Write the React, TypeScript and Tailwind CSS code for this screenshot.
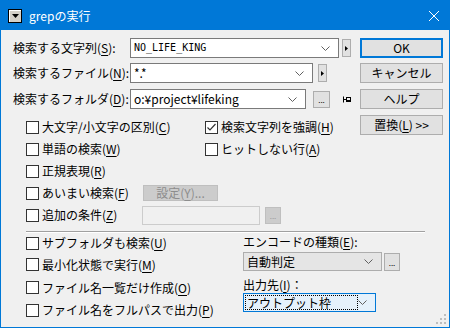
import React from "react";

const jp = "font-['Meiryo_UI','Noto_Sans_CJK_JP',sans-serif]";

function K({ k }: { k: string }) {
  return <span className="underline underline-offset-[2px]">{k}</span>;
}

function Chevron() {
  return (
    <svg width="9" height="5" viewBox="0 0 9 5" className="shrink-0">
      <path d="M0.5 0.5 L4.5 4.5 L8.5 0.5" fill="none" stroke="#606060" strokeWidth="1" />
    </svg>
  );
}

function Box({ checked }: { checked?: boolean }) {
  return (
    <span className="flex h-[13px] w-[13px] shrink-0 items-center justify-center border border-[#333333] bg-white">
      {checked && (
        <svg width="11" height="11" viewBox="0 0 11 11">
          <path d="M1.5 5.5 L4 8 L9.5 2" fill="none" stroke="#333333" strokeWidth="1.2" />
        </svg>
      )}
    </span>
  );
}

function Check({ checked, children }: { checked?: boolean; children: React.ReactNode }) {
  return (
    <div className="flex items-center gap-[3px] whitespace-nowrap">
      <Box checked={checked} />
      <span>{children}</span>
    </div>
  );
}

function ArrowBtn() {
  return (
    <div className="flex h-[18px] w-[9px] shrink-0 items-center justify-center border border-[#adadad] bg-[#e1e1e1]">
      <svg width="3" height="5" viewBox="0 0 3 5">
        <path d="M0 0 L3 2.5 L0 5 Z" fill="#000" />
      </svg>
    </div>
  );
}

function Btn({ children, def }: { children: React.ReactNode; def?: boolean }) {
  return (
    <div
      className={
        def
          ? "flex h-[20px] w-[83px] items-center justify-center border border-[#0078d7] bg-[#e1e1e1] shadow-[inset_0_0_0_1px_#0078d7]"
          : "flex h-[20px] w-[83px] items-center justify-center border border-[#adadad] bg-[#e1e1e1]"
      }
    >
      {children}
    </div>
  );
}

export default function App() {
  return (
    <div className={`flex h-[328px] w-[450px] flex-col border border-[#0078d7] text-[12px] leading-none text-black ${jp}`}>
      {/* title bar */}
      <div className="flex h-[29px] shrink-0 items-center bg-[#0078d7] text-white">
        <div className="ml-[7px] flex h-[14px] w-[14px] items-center justify-center border border-black bg-[#d4d0c8] shadow-[inset_1px_1px_0_#ffffff]">
          <svg width="7" height="4" viewBox="0 0 7 4">
            <path d="M0 0 H7 L3.5 4 Z" fill="#000" />
          </svg>
        </div>
        <span className="ml-[7px] text-[12px]">grepの実行</span>
        <svg width="10" height="10" viewBox="0 0 10 10" className="ml-auto mr-[10px]">
          <path d="M0 0 L10 10 M10 0 L0 10" stroke="#fff" strokeWidth="1" />
        </svg>
      </div>

      {/* body */}
      <div className="relative flex-1 bg-[#f0f0f0] pl-[12px] pr-[6px] pt-[8px]">
        <div className="flex">
          <div className="flex flex-1 flex-col">
            <div className="flex h-[20px] items-center">
              <span className="w-[117px] shrink-0">検索する文字列(<K k="S" />):</span>
              <div className="flex h-[20px] w-[209px] items-center justify-between border border-[#7a7a7a] bg-white pl-[3px] pr-[8px]">
                <span className="font-['DejaVu_Sans_Mono',monospace] text-[10px]">NO_LIFE_KING</span>
                <Chevron />
              </div>
              <div className="ml-[3px]"><ArrowBtn /></div>
            </div>
            <div className="mt-[5px] flex h-[20px] items-center">
              <span className="w-[117px] shrink-0">検索するファイル(<K k="N" />):</span>
              <div className="flex h-[20px] w-[183px] items-center justify-between border border-[#7a7a7a] bg-white pl-[3px] pr-[8px]">
                <span>*.*</span>
                <Chevron />
              </div>
              <div className="ml-[5px]"><ArrowBtn /></div>
            </div>
            <div className="mt-[6px] flex h-[20px] items-center">
              <span className="w-[117px] shrink-0">検索するフォルダ(<K k="D" />):</span>
              <div className="flex h-[20px] w-[176px] items-center justify-between border border-[#7a7a7a] bg-white pl-[3px] pr-[8px]">
                <span>o:¥project¥lifeking</span>
                <Chevron />
              </div>
              <div className="ml-[7px] flex h-[17px] w-[17px] items-end justify-center border border-[#adadad] bg-[#e1e1e1] pb-[3px] text-[8px]">...</div>
              <svg width="8" height="7" viewBox="0 0 8 7" className="ml-[13px]">
                <path d="M0.5 0.5 V6.5 M0.5 3.5 H3" stroke="#000" strokeWidth="1" fill="none" />
                <rect x="3.5" y="1.5" width="4" height="4" stroke="#000" strokeWidth="1" fill="none" />
                <path d="M3.5 4.5 H7.5" stroke="#000" strokeWidth="1" />
              </svg>
            </div>

            {/* options */}
            <div className="ml-[13px] mt-[7px] flex flex-col">
              <div className="flex h-[22px] items-center">
                <div className="w-[179px]"><Check>大文字/小文字の区別(<K k="C" />)</Check></div>
                <Check checked>検索文字列を強調(<K k="H" />)</Check>
              </div>
              <div className="flex h-[22px] items-center">
                <div className="w-[179px]"><Check>単語の検索(<K k="W" />)</Check></div>
                <Check>ヒットしない行(<K k="A" />)</Check>
              </div>
              <div className="flex h-[22px] items-center">
                <Check>正規表現(<K k="R" />)</Check>
              </div>
              <div className="flex h-[22px] items-center">
                <div className="w-[117px]"><Check>あいまい検索(<K k="F" />)</Check></div>
                <div className="flex h-[16px] w-[75px] items-center justify-center border border-[#bfbfbf] bg-[#cccccc] text-[#8d8d8d]">
                  設定(<K k="Y" />)...
                </div>
              </div>
              <div className="flex h-[22px] items-center">
                <div className="w-[116px]"><Check>追加の条件(<K k="Z" />)</Check></div>
                <div className="h-[19px] w-[118px] border border-[#cccccc] bg-[#f0f0f0]" />
                <div className="ml-[5px] flex h-[17px] w-[16px] items-end justify-center border border-[#bfbfbf] bg-[#cccccc] pb-[3px] text-[8px] text-[#9a9a9a]">...</div>
              </div>
            </div>
          </div>

          <div className="flex w-[83px] flex-col">
            <Btn def>OK</Btn>
            <div className="mt-[5px]"><Btn>キャンセル</Btn></div>
            <div className="mt-[6px]"><Btn>ヘルプ</Btn></div>
            <div className="mt-[6px]"><Btn>置換(<K k="L" />) &gt;&gt;</Btn></div>
          </div>
        </div>

        {/* separator */}
        <div className="ml-[13px] mt-[5px] h-[2px] w-[399px] border-t border-b border-t-[#a0a0a0] border-b-white" />

        {/* lower section */}
        <div className="ml-[13px] flex">
          <div className="flex w-[217px] flex-col">
            <div className="flex h-[20px] items-center"><Check>サブフォルダも検索(<K k="U" />)</Check></div>
            <div className="flex h-[23px] items-center"><Check>最小化状態で実行(<K k="M" />)</Check></div>
            <div className="flex h-[23px] items-center"><Check>ファイル名一覧だけ作成(<K k="O" />)</Check></div>
            <div className="flex h-[22px] items-center"><Check>ファイル名をフルパスで出力(<K k="P" />)</Check></div>
          </div>
          <div className="flex flex-col">
            <div className="flex h-[18px] items-center">エンコードの種類(<K k="E" />):</div>
            <div className="mt-[1px] flex items-center">
              <div className="flex h-[19px] w-[139px] items-center justify-between border border-[#adadad] bg-[#e5e5e5] pl-[3px] pr-[8px]">
                <span>自動判定</span>
                <Chevron />
              </div>
              <div className="ml-[2px] flex h-[18px] w-[16px] items-end justify-center border border-[#adadad] bg-[#e1e1e1] pb-[3px] text-[8px]">...</div>
            </div>
            <div className="mt-[6px] flex h-[16px] items-center">出力先(<K k="I" />)：</div>
            <div className="flex h-[19px] w-[133px] items-center justify-between border border-[#0078d7] bg-[#e5f1fb] pl-[1px] pr-[8px]">
              <span className="flex h-[15px] w-[113px] items-center border border-dotted border-black pl-[1px]">アウトプット枠</span>
              <Chevron />
            </div>
          </div>
        </div>

        {/* resize grip */}
        <svg width="11" height="11" viewBox="0 0 11 11" className="absolute bottom-[2px] right-[2px]">
          <rect x="8" y="0" width="2" height="2" fill="#bdbdbd" />
          <rect x="4" y="4" width="2" height="2" fill="#bdbdbd" />
          <rect x="8" y="4" width="2" height="2" fill="#bdbdbd" />
          <rect x="0" y="8" width="2" height="2" fill="#bdbdbd" />
          <rect x="4" y="8" width="2" height="2" fill="#bdbdbd" />
          <rect x="8" y="8" width="2" height="2" fill="#bdbdbd" />
        </svg>
      </div>
    </div>
  );
}
